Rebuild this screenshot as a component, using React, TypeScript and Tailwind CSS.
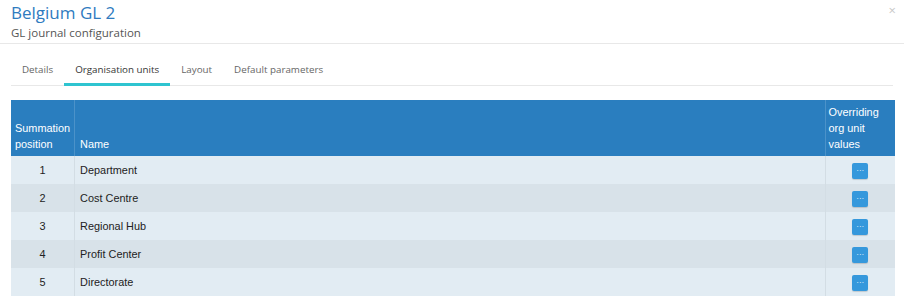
import React from "react";

const rows = [
  { pos: 1, name: "Department" },
  { pos: 2, name: "Cost Centre" },
  { pos: 3, name: "Regional Hub" },
  { pos: 4, name: "Profit Center" },
  { pos: 5, name: "Directorate" },
];

export default function App() {
  return (
    <div className="w-[904px] h-[308px] bg-white overflow-hidden" style={{ fontFamily: '"Open Sans", sans-serif' }}>
      <div className="relative h-[44px] border-b border-[#e8e8e8] px-[11px]">
        <div className="text-[17px] leading-[24px] pt-[1px] text-[#2f7bbf]">Belgium GL 2</div>
        <div className="text-[11.5px] leading-[16px] text-[#555]">GL journal configuration</div>
        <div className="absolute right-[8px] top-[1px] text-[13px] text-[#c8c8c8]">×</div>
      </div>
      <div className="px-[11px] pt-[12px]">
        <div className="flex h-[30px] border-b border-[#e8e8e8] text-[9.8px] text-[#666]">
          <div className="px-[11px] pt-[7px]">Details</div>
          <div className="px-[11px] pt-[7px] text-[#333] border-b-[3px] border-[#2ec4d0] -mb-[1px]">Organisation units</div>
          <div className="px-[11px] pt-[7px]">Layout</div>
          <div className="px-[11px] pt-[7px]">Default parameters</div>
        </div>
        <table className="mt-[14px] w-[884px] border-collapse text-[10.9px]" style={{ fontFamily: '"Liberation Sans", Arial, sans-serif' }}>
          <thead>
            <tr className="bg-[#2a7ebf] text-white h-[56px]">
              <th className="w-[63px] border-r border-[#4b92c9] font-normal text-left align-bottom px-[4px] pb-[4px] leading-[16px]">Summation position</th>
              <th className="border-r border-[#4b92c9] font-normal text-left align-bottom px-[5px] pb-[4px] leading-[16px]">Name</th>
              <th className="w-[70px] font-normal text-left align-bottom px-[3px] pb-[4px] leading-[16px]">Overriding org unit values</th>
            </tr>
          </thead>
          <tbody>
            {rows.map((r, i) => (
              <tr key={r.pos} className={`h-[28px] ${i % 2 === 0 ? "bg-[#e2ecf3]" : "bg-[#d8e2e9]"} text-[#222]`}>
                <td className="text-center border-r border-[#d3dde4]">{r.pos}</td>
                <td className="px-[5px] border-r border-[#d3dde4]">{r.name}</td>
                <td className="text-center">
                  <span className="inline-flex items-center justify-center w-[16px] h-[16px] mt-[2px] rounded-[2px] bg-[#3598dc] text-white text-[8px] leading-none align-middle shadow-[0_1px_1px_rgba(0,0,0,0.15)]">···</span>
                </td>
              </tr>
            ))}
          </tbody>
        </table>
      </div>
    </div>
  );
}
